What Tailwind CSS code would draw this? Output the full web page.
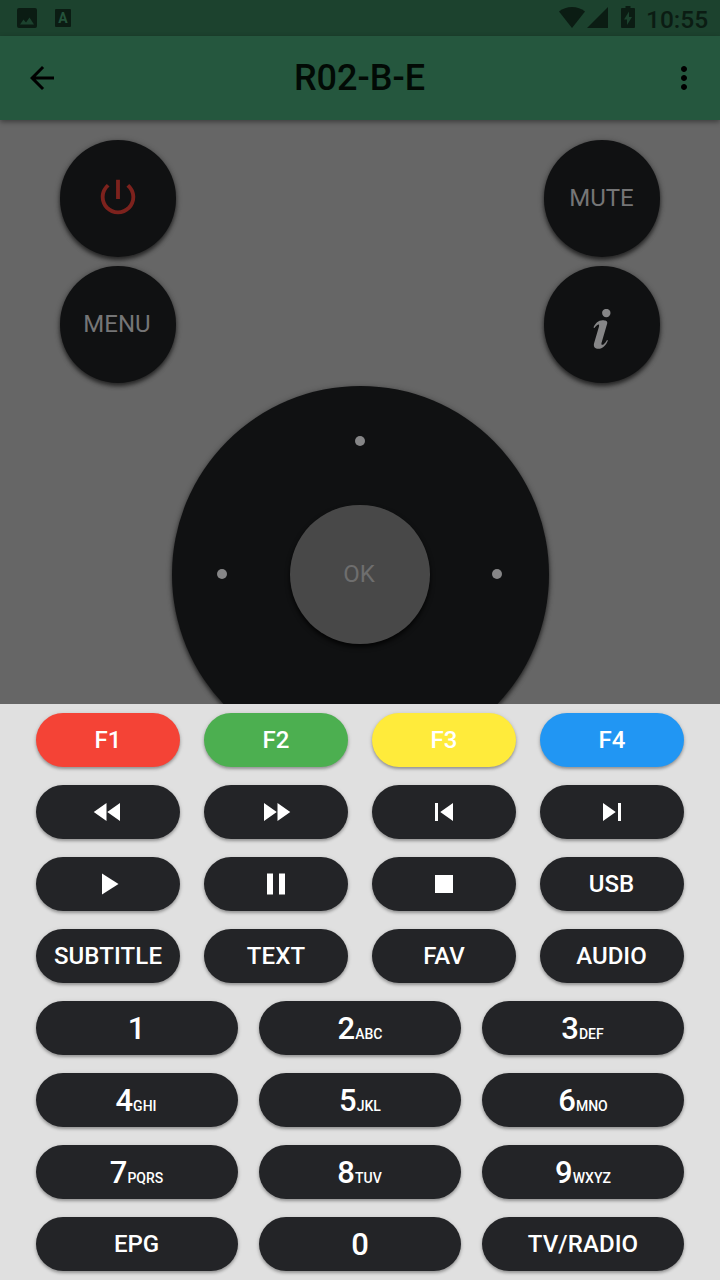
<!DOCTYPE html>
<html lang="en">
<head>
  <meta charset="UTF-8" />
  <meta name="viewport" content="width=device-width, initial-scale=1.0"/>
  <title>R02-B-E</title>
  <script src="https://cdn.jsdelivr.net/npm/@tailwindcss/browser@4"></script>
  <style>
    body { font-family: Roboto, 'Liberation Sans', sans-serif; }
    .key { display: flex; align-items: center; justify-content: center; height: 54px; border-radius: 27px; box-shadow: 0 2px 3px rgba(0,0,0,.28), 0 1px 5px rgba(0,0,0,.12); }
    .round { box-shadow: 0 3px 4px rgba(0,0,0,.55), 0 1px 6px rgba(0,0,0,.3); }
  </style>
</head>
<body class="bg-[#666666] w-[720px] h-[1280px] overflow-hidden flex flex-col">

  <!-- Status bar -->
  <div class="h-9 shrink-0 bg-[#1c422e] text-[#0b1c13] flex items-center justify-between pl-[17px] pr-3">
    <div class="flex items-center gap-[18px]">
      <svg class="w-5 h-5" viewBox="0 0 20 20" fill="currentColor"><path fill-rule="evenodd" d="M2 0h16a2 2 0 0 1 2 2v16a2 2 0 0 1-2 2H2a2 2 0 0 1-2-2V2a2 2 0 0 1 2-2zM3 16.500h14l-4.500-7-3.500 5-2.500-3z"/></svg>
      <div class="w-4 h-[18px] rounded-[1px] bg-[#0b1c13] text-[#24533b] text-sm leading-[19px] font-bold text-center">A</div>
    </div>
    <div class="flex items-center">
      <svg class="w-[26px] h-[21px] -mt-0.5" viewBox="0 0 26 21" fill="currentColor"><path d="M0 4.500C7-1.500 19-1.500 26 4.500L13 21z"/></svg>
      <svg class="w-[21px] h-[21px] ml-0.5 -mt-0.5" viewBox="0 0 21 21" fill="currentColor"><path d="M21 0v21H0z"/></svg>
      <svg class="w-[14px] h-[22px] ml-[13px] -mt-0.5" viewBox="0 0 14 22" fill="currentColor"><path fill-rule="evenodd" d="M4.500 0h5v2H13a1 1 0 0 1 1 1v18a1 1 0 0 1-1 1H1a1 1 0 0 1-1-1V3a1 1 0 0 1 1-1h3.500zM8 5.500L3 13.500h3V19l5-8H8z"/></svg>
      <span class="ml-[11px] w-[62px] text-[24.5px] leading-9 font-medium mt-[3px] whitespace-nowrap">10:55</span>
    </div>
  </div>

  <!-- App bar -->
  <header class="h-[84px] shrink-0 bg-[#25573e] text-black flex items-center justify-between pl-6 pr-[18px] shadow-[0_2px_5px_rgba(0,0,0,0.4)] z-10">
    <svg class="w-9 h-9" viewBox="0 0 24 24" fill="currentColor"><path d="M20 11H7.830l5.590-5.590L12 4l-8 8 8 8 1.410-1.410L7.830 13H20v-2z"/></svg>
    <h1 class="text-4xl font-medium text-[#020a05] mr-[7px]">R02-B-E</h1>
    <svg class="w-9 h-9" viewBox="0 0 24 24" fill="currentColor"><path d="M12 8c1.100 0 2-.9 2-2s-.9-2-2-2-2 .9-2 2 .9 2 2 2zm0 2c-1.100 0-2 .9-2 2s.9 2 2 2 2-.9 2-2-.9-2-2-2zm0 6c-1.100 0-2 .9-2 2s.9 2 2 2 2-.9 2-2-.9-2-2-2z"/></svg>
  </header>

  <!-- Remote -->
  <main class="h-[584px] shrink-0 overflow-hidden pt-[19.5px] text-[#757576] text-2xl">
    <div class="flex justify-between px-[60px]">
      <div class="flex flex-col gap-[9px]">
        <div class="round w-[116px] h-[117px] rounded-full bg-[#101112] flex items-center justify-center">
          <svg class="w-[46px] h-[46px] -mt-[3px] text-[#7d221d]" viewBox="0 0 24 24" fill="currentColor"><path d="M13 3h-2v10h2V3zm4.830 2.170l-1.420 1.420C17.990 7.860 19 9.810 19 12c0 3.870-3.130 7-7 7s-7-3.130-7-7c0-2.190 1.010-4.140 2.580-5.420L6.170 5.170C4.230 6.820 3 9.260 3 12c0 4.970 4.030 9 9 9s9-4.030 9-9c0-2.740-1.230-5.180-3.170-6.830z"/></svg>
        </div>
        <div class="round w-[116px] h-[117px] rounded-full bg-[#101112] flex items-center justify-center pr-[2px] pb-px">MENU</div>
      </div>
      <div class="flex flex-col gap-[9px]">
        <div class="round w-[116px] h-[117px] rounded-full bg-[#101112] flex items-center justify-center pr-px pb-px">MUTE</div>
        <div class="round w-[116px] h-[117px] rounded-full bg-[#101112] flex items-center justify-center">
          <svg class="w-5 h-[42px] mt-[11px] mr-0.5 text-[#868687]" viewBox="0 0 20 42" fill="currentColor"><circle cx="15.300" cy="4" r="4.200"/><path d="M2.500 18.500C4 14.500 7.500 11.300 11.500 11.300c3 0 5.300.7 4.700 3.200L10.500 34c-.5 2 1 2.500 2.500 1 1.200-1 2.200-2.500 3-4l.9.5c-1.900 5-5.400 8.300-9.400 8.300-3.500 0-5.200-1.800-4.500-5.300l5-17c.5-2-.5-2.500-2-1.300-1 .8-1.800 1.800-2.500 2.800z"/></svg>
        </div>
      </div>
    </div>

    <!-- D-pad -->
    <div class="round mt-[3px] mx-auto w-[377px] h-[377px] rounded-full bg-[#101112] flex flex-col items-center justify-between py-[50px]">
      <span class="w-2.5 h-2.5 rounded-full bg-[#868687]"></span>
      <div class="w-[285px] mr-px flex items-center justify-between">
        <span class="w-2.5 h-2.5 rounded-full bg-[#868687]"></span>
        <div class="w-[140px] h-[139px] rounded-full bg-[#484848] text-[#6e6e6e] flex items-center justify-center pr-px shadow-[0_3px_5px_rgba(0,0,0,0.8)]">OK</div>
        <span class="w-2.5 h-2.5 rounded-full bg-[#868687]"></span>
      </div>
      <span class="w-2.5 h-2.5 -mb-1 mt-1 rounded-full bg-[#868687]"></span>
    </div>
  </main>

  <!-- Bottom sheet -->
  <section class="h-[576px] shrink-0 bg-[#e0e0e0] px-9 pt-[9px] text-white text-2xl font-medium z-10">
    <div class="grid grid-cols-4 gap-x-6 gap-y-[18px]">
      <button class="key bg-[#f44336]">F1</button>
      <button class="key bg-[#4caf50]">F2</button>
      <button class="key bg-[#ffeb3b]">F3</button>
      <button class="key bg-[#2196f3]">F4</button>

      <button class="key bg-[#232427]"><svg class="w-9 h-9" viewBox="0 0 24 24" fill="currentColor"><path d="M11 18V6l-8.500 6 8.500 6zm.5-6l8.500 6V6l-8.500 6z"/></svg></button>
      <button class="key bg-[#232427]"><svg class="w-9 h-9" viewBox="0 0 24 24" fill="currentColor"><path d="M4 18l8.500-6L4 6v12zm9-12v12l8.500-6L13 6z"/></svg></button>
      <button class="key bg-[#232427]"><svg class="w-9 h-9" viewBox="0 0 24 24" fill="currentColor"><path d="M6 6h2v12H6zm3.500 6l8.500 6V6z"/></svg></button>
      <button class="key bg-[#232427]"><svg class="w-9 h-9" viewBox="0 0 24 24" fill="currentColor"><path d="M6 18l8.500-6L6 6v12zM16 6v12h2V6h-2z"/></svg></button>

      <button class="key bg-[#232427]"><svg class="w-9 h-9" viewBox="0 0 24 24" fill="currentColor"><path d="M8 5v14l11-7z"/></svg></button>
      <button class="key bg-[#232427]"><svg class="w-9 h-9" viewBox="0 0 24 24" fill="currentColor"><path d="M6 19h4V5H6v14zm8-14v14h4V5h-4z"/></svg></button>
      <button class="key bg-[#232427]"><svg class="w-9 h-9" viewBox="0 0 24 24" fill="currentColor"><path d="M6 6h12v12H6z"/></svg></button>
      <button class="key bg-[#232427] pr-px">USB</button>

      <button class="key bg-[#232427] tracking-[0.1px]">SUBTITLE</button>
      <button class="key bg-[#232427] tracking-[0.1px]">TEXT</button>
      <button class="key bg-[#232427]">FAV</button>
      <button class="key bg-[#232427] pr-px">AUDIO</button>
    </div>

    <!-- Number pad -->
    <div class="grid grid-cols-3 gap-x-[21px] gap-y-[18px] mt-[18px]">
      <button class="key bg-[#232427] pt-0.5 pr-px"><span class="text-[31px]">1</span></button>
      <button class="key bg-[#232427] pt-0.5"><span><span class="text-[31px]">2</span><span class="text-sm">ABC</span></span></button>
      <button class="key bg-[#232427] pt-0.5 pr-px"><span><span class="text-[31px]">3</span><span class="text-sm">DEF</span></span></button>
      <button class="key bg-[#232427] pt-0.5 pr-[2px]"><span><span class="text-[31px]">4</span><span class="text-sm">GHI</span></span></button>
      <button class="key bg-[#232427] pt-0.5"><span><span class="text-[31px]">5</span><span class="text-sm">JKL</span></span></button>
      <button class="key bg-[#232427] pt-0.5"><span><span class="text-[31px]">6</span><span class="text-sm">MNO</span></span></button>
      <button class="key bg-[#232427] pt-0.5 pr-px"><span><span class="text-[31px]">7</span><span class="text-sm">PQRS</span></span></button>
      <button class="key bg-[#232427] pt-0.5 pr-px"><span><span class="text-[31px]">8</span><span class="text-sm">TUV</span></span></button>
      <button class="key bg-[#232427] pt-0.5"><span><span class="text-[31px]">9</span><span class="text-sm">WXYZ</span></span></button>
      <button class="key bg-[#232427] pr-px">EPG</button>
      <button class="key bg-[#232427] pt-0.5"><span class="text-[31px]">0</span></button>
      <button class="key bg-[#232427] tracking-[0.1px]">TV/RADIO</button>
    </div>
  </section>

</body>
</html>
